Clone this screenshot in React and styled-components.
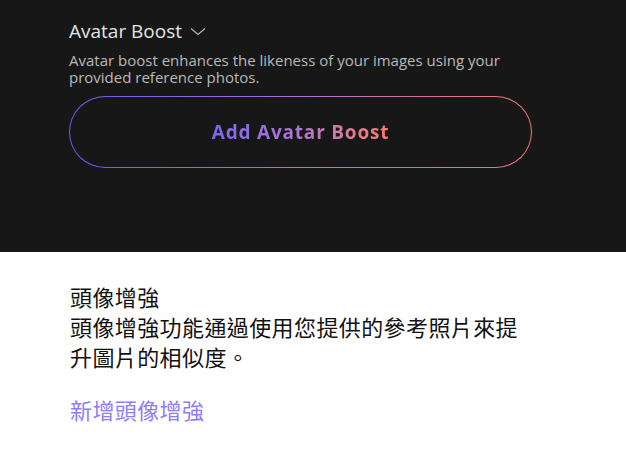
import React from 'react'
import styled, { createGlobalStyle } from 'styled-components'

const GlobalStyle = createGlobalStyle`
  body {
    margin: 0;
    background: #ffffff;
    font-family: 'Open Sans', 'Liberation Sans', sans-serif;
  }
`

const DarkPanel = styled.section`
  background-color: #171717;
  height: 252px;
  box-sizing: border-box;
  padding: 18px 0 0 69px;
`

const Content = styled.div`
  width: 463px;
`

const TitleRow = styled.div`
  display: flex;
  align-items: center;
  gap: 8px;
  color: #e4e4e4;
  font-size: 19px;
  line-height: 27px;
  font-weight: 400;
`

const Description = styled.p`
  margin: 7px 0 0;
  font-size: 15px;
  line-height: 17px;
  color: #b9b9b9;
`

const BoostButton = styled.button`
  display: flex;
  align-items: center;
  justify-content: center;
  width: 100%;
  height: 72px;
  margin-top: 10px;
  border-radius: 36px;
  border: 1px solid transparent;
  background:
    linear-gradient(#171717, #171717) padding-box,
    linear-gradient(90deg, #6c5cf2 0%, #b070d8 50%, #f5786c 100%) border-box;
  cursor: pointer;
  font-family: inherit;
`

const GradientLabel = styled.span`
  font-size: 19px;
  font-weight: 700;
  letter-spacing: 0.8px;
  background: linear-gradient(90deg, #7a68f4 0%, #b476d0 50%, #f87e6a 100%);
  -webkit-background-clip: text;
  background-clip: text;
  color: transparent;
`

const LightPanel = styled.section`
  padding: 29px 0 0 70px;
  font-family: 'Noto Sans CJK TC', 'Noto Sans CJK SC', sans-serif;
  font-size: 22px;
  line-height: 30px;
  color: #111111;
`

const TextBlock = styled.div`
  width: 465px;
  letter-spacing: 0.4px;
`

const Line = styled.p`
  margin: 0;
`

const LinkText = styled.p`
  margin: 23px 0 0;
  color: #8e7ef6;
  letter-spacing: 0.4px;
`

const Chevron = () => (
  <svg width='16' height='9' viewBox='0 0 16 9' fill='none'>
    <path d='M1 1.5L8 7.5L15 1.5' stroke='#b8b8b8' strokeWidth='1.2' />
  </svg>
)

export default function App() {
  return (
    <>
      <GlobalStyle />
      <DarkPanel>
        <Content>
          <TitleRow>
            Avatar Boost
            <Chevron />
          </TitleRow>
          <Description>
            Avatar boost enhances the likeness of your images using your
            provided reference photos.
          </Description>
          <BoostButton>
            <GradientLabel>Add Avatar Boost</GradientLabel>
          </BoostButton>
        </Content>
      </DarkPanel>
      <LightPanel>
        <TextBlock>
          <Line>頭像增強</Line>
          <Line>頭像增強功能通過使用您提供的參考照片來提升圖片的相似度。</Line>
        </TextBlock>
        <LinkText>新增頭像增強</LinkText>
      </LightPanel>
    </>
  )
}
